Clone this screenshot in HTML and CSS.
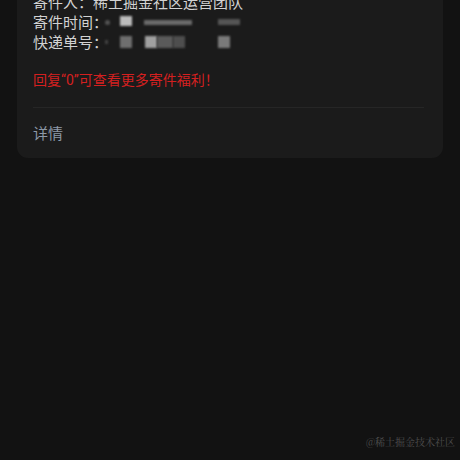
FILE: index.html
```html
<!DOCTYPE html>
<html>
<head>
<meta charset="utf-8">
<link rel="stylesheet" href="styles.css">
</head>
<body>
<div class="page">
  <div class="card">
    <div class="info">
      <div class="row first"><span class="label">寄件人：</span><span class="val">稀土掘金社区运营团队</span></div>
      <div class="row"><span class="label fixed">寄件时间：</span><span class="blur">
        <i class="b dot"></i><i class="b b1"></i><i class="b smudge"></i><i class="b b3"></i>
      </span></div>
      <div class="row"><span class="label fixed">快递单号：</span><span class="blur">
        <i class="b dot2"></i><i class="b c1"></i><i class="b c2"></i><i class="b c3"></i><i class="b c4"></i><i class="b c5"></i>
      </span></div>
    </div>
    <div class="promo">回复“0”可查看更多寄件福利！</div>
    <div class="divider"></div>
    <div class="detail">详情</div>
  </div>
  <div class="watermark">@稀土掘金技术社区</div>
</div>
</body>
</html>
```

FILE: styles.css
```css
html, body {
  margin: 0;
  padding: 0;
  background: #121212;
}
body {
  width: 460px;
  height: 460px;
  overflow: hidden;
  font-family: "Noto Sans CJK SC", "Noto Sans", sans-serif;
}
.page {
  position: relative;
  width: 460px;
  height: 460px;
  padding: 0 17px;
  box-sizing: border-box;
}
.card {
  background: #1b1b1b;
  border-radius: 0 0 11px 11px;
  margin-top: -8px;
  padding: 0 19px 0 16px;
}
.info {
  display: flex;
  flex-direction: column;
}
.row {
  display: flex;
  align-items: center;
  height: 20px;
  font-size: 15px;
  line-height: 20px;
  color: #d2d2d2;
}
.label {
  flex: none;
  white-space: nowrap;
}
.label.fixed {
  width: 72px;
}
.val {
  color: #d2d2d2;
}
.blur {
  display: flex;
  align-items: center;
  height: 20px;
  flex: 1;
}
.b {
  display: block;
  filter: blur(1px);
}
.dot { width: 5px; height: 5px; background: #555; border-radius: 50%; }
.b1 { width: 12px; height: 10px; background: #bdbdbd; margin-left: 10px; margin-top: -2px; }
.smudge { width: 48px; height: 5px; background: #6a6a6a; margin-left: 12px; }
.b3 { width: 22px; height: 6px; background: #555; margin-left: 26px; }
.dot2 { width: 3px; height: 4px; background: #444; }
.c1 { width: 12px; height: 12px; background: #6e6e6e; margin-left: 12px; }
.c2 { width: 12px; height: 12px; background: #a0a0a0; margin-left: 13px; }
.c3 { width: 16px; height: 12px; background: #5a5a5a; }
.c4 { width: 12px; height: 12px; background: #4e4e4e; }
.c5 { width: 12px; height: 12px; background: #7a7a7a; margin-left: 33px; }
.promo {
  margin-top: 18px;
  font-family: "Roboto", "Noto Sans CJK SC", sans-serif;
  font-size: 14px;
  line-height: 20px;
  color: #d42020;
}
.divider {
  height: 1px;
  background: #262626;
  margin-top: 17px;
}
.detail {
  padding: 14px 0 15px;
  font-size: 15px;
  line-height: 21px;
  color: #8d99a8;
}
.watermark {
  position: absolute;
  right: 5px;
  bottom: 4px;
  font-family: "Noto Serif CJK SC", "Noto Sans CJK SC", serif;
  font-size: 10px;
  line-height: 13px;
  color: #4e4e4e;
}
```
